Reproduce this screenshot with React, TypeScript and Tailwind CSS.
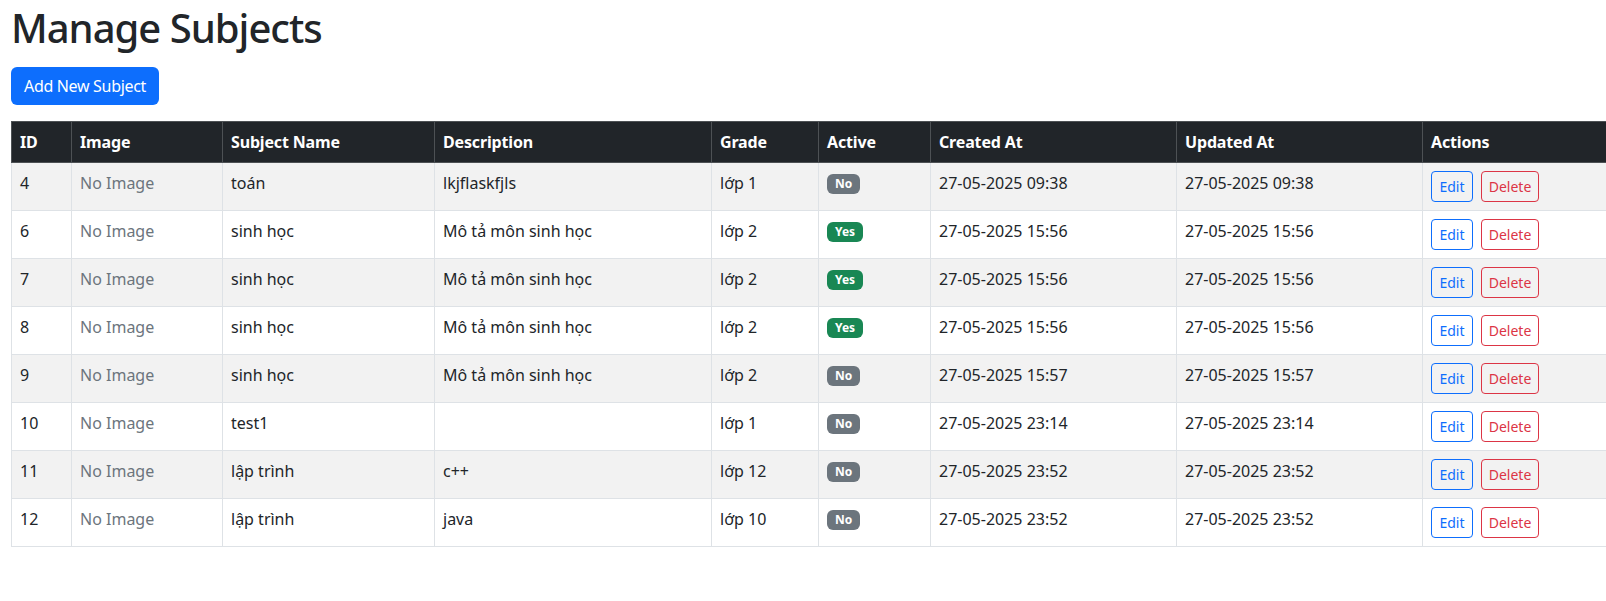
import React from 'react';

type Subject = {
  id: number;
  name: string;
  description: string;
  grade: string;
  active: boolean;
  createdAt: string;
  updatedAt: string;
};

const subjects: Subject[] = [
  { id: 4, name: 'toán', description: 'lkjflaskfjls', grade: 'lớp 1', active: false, createdAt: '27-05-2025 09:38', updatedAt: '27-05-2025 09:38' },
  { id: 6, name: 'sinh học', description: 'Mô tả môn sinh học', grade: 'lớp 2', active: true, createdAt: '27-05-2025 15:56', updatedAt: '27-05-2025 15:56' },
  { id: 7, name: 'sinh học', description: 'Mô tả môn sinh học', grade: 'lớp 2', active: true, createdAt: '27-05-2025 15:56', updatedAt: '27-05-2025 15:56' },
  { id: 8, name: 'sinh học', description: 'Mô tả môn sinh học', grade: 'lớp 2', active: true, createdAt: '27-05-2025 15:56', updatedAt: '27-05-2025 15:56' },
  { id: 9, name: 'sinh học', description: 'Mô tả môn sinh học', grade: 'lớp 2', active: false, createdAt: '27-05-2025 15:57', updatedAt: '27-05-2025 15:57' },
  { id: 10, name: 'test1', description: '', grade: 'lớp 1', active: false, createdAt: '27-05-2025 23:14', updatedAt: '27-05-2025 23:14' },
  { id: 11, name: 'lập trình', description: 'c++', grade: 'lớp 12', active: false, createdAt: '27-05-2025 23:52', updatedAt: '27-05-2025 23:52' },
  { id: 12, name: 'lập trình', description: 'java', grade: 'lớp 10', active: false, createdAt: '27-05-2025 23:52', updatedAt: '27-05-2025 23:52' },
];

const headers = ['ID', 'Image', 'Subject Name', 'Description', 'Grade', 'Active', 'Created At', 'Updated At', 'Actions'];
const widths = ['w-[60px]', 'w-[151px]', 'w-[212px]', 'w-[277px]', 'w-[107px]', 'w-[112px]', 'w-[246px]', 'w-[246px]', 'w-[200px]'];

const cell = 'border border-[#dee2e6] px-2 py-2 leading-6 align-top';

const App: React.FC = () => {
  return (
    <div className="w-full overflow-hidden bg-white text-[#212529] font-['Noto_Sans',sans-serif] text-base">
      <div className="px-[11px] pt-[11px] pb-10">
        <h1 className="text-[40px] leading-[33px] font-medium tracking-[-0.025em] mb-[23px]">Manage Subjects</h1>

        <button className="bg-[#0d6efd] text-white rounded-md h-[38px] w-[148px] mb-4 text-base whitespace-nowrap tracking-[-0.02em]">
          Add New Subject
        </button>

        <table className="table-fixed border-collapse w-[1611px]">
          <colgroup>
            {widths.map((w, i) => (
              <col key={i} className={w} />
            ))}
          </colgroup>
          <thead>
            <tr className="bg-[#212529] text-white">
              {headers.map((h) => (
                <th key={h} className="border border-[#4d5154] px-2 py-2 text-left font-bold leading-6 tracking-[-0.01em]">
                  {h}
                </th>
              ))}
            </tr>
          </thead>
          <tbody>
            {subjects.map((s, i) => (
              <tr key={s.id} className={i % 2 === 0 ? 'bg-[#f2f2f2]' : 'bg-white'}>
                <td className={`${cell} h-[48px]`}>{s.id}</td>
                <td className={`${cell} text-[#6c757d]`}>No Image</td>
                <td className={cell}>{s.name}</td>
                <td className={cell}>{s.description}</td>
                <td className={cell}>{s.grade}</td>
                <td className={cell}>
                  <div className="flex pt-[3px]">
                    <span
                      className={`rounded-[6px] px-[8px] h-[20px] leading-[20px] text-[12px] font-bold text-white ${
                        s.active ? 'bg-[#198754]' : 'bg-[#6c757d]'
                      }`}
                    >
                      {s.active ? 'Yes' : 'No'}
                    </span>
                  </div>
                </td>
                <td className={cell}>{s.createdAt}</td>
                <td className={cell}>{s.updatedAt}</td>
                <td className="border border-[#dee2e6] px-2 py-2 align-top">
                  <div className="flex gap-2">
                    <button className="h-[31px] w-[42px] rounded-[4px] border border-[#0d6efd] text-[#0d6efd] text-[14px] bg-transparent">
                      Edit
                    </button>
                    <button className="h-[31px] w-[58px] rounded-[4px] border border-[#dc3545] text-[#dc3545] text-[14px] bg-transparent">
                      Delete
                    </button>
                  </div>
                </td>
              </tr>
            ))}
          </tbody>
        </table>
      </div>
    </div>
  );
};

export default App;
